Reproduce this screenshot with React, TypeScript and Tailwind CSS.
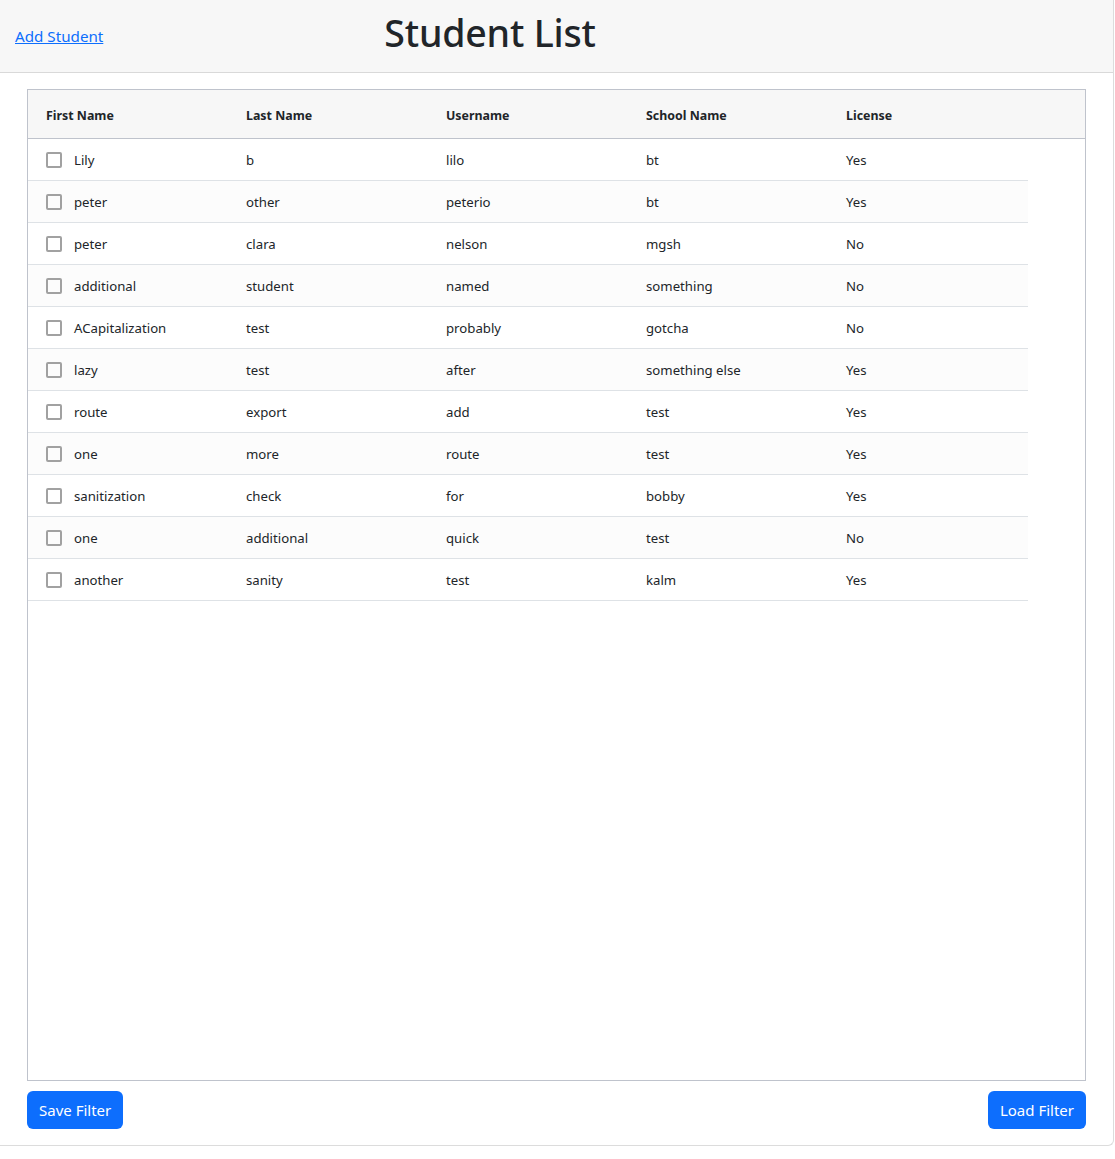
import React from "react";

const rows = [
  ["Lily", "b", "lilo", "bt", "Yes"],
  ["peter", "other", "peterio", "bt", "Yes"],
  ["peter", "clara", "nelson", "mgsh", "No"],
  ["additional", "student", "named", "something", "No"],
  ["ACapitalization", "test", "probably", "gotcha", "No"],
  ["lazy", "test", "after", "something else", "Yes"],
  ["route", "export", "add", "test", "Yes"],
  ["one", "more", "route", "test", "Yes"],
  ["sanitization", "check", "for", "bobby", "Yes"],
  ["one", "additional", "quick", "test", "No"],
  ["another", "sanity", "test", "kalm", "Yes"],
];

const headers = ["First Name", "Last Name", "Username", "School Name", "License"];

export default function App() {
  return (
    <div
      className="w-[1114px] h-[1146px] bg-white border-r border-b border-[#dcdcdc] rounded-br-[6px] text-[#212529] flex flex-col"
      style={{ fontFamily: '"Noto Sans", "Open Sans", sans-serif' }}
    >
      <div className="h-[73px] bg-[#f7f7f7] border-b border-[#d9d9d9] flex items-center px-[15px] shrink-0">
        <a href="#" className="text-[#0d6efd] underline text-[15.2px] leading-none mt-[1px]">
          Add Student
        </a>
        <h1 className="ml-[281px] text-[37.5px] font-medium leading-none -mt-[6px] tracking-[-0.2px]">Student List</h1>
      </div>
      <div className="flex-1 flex flex-col px-[27px] pt-[16px] pb-[16px]">
        <div className="h-[992px] border border-[#bfc3cc] flex flex-col">
          <div className="h-[49px] bg-[#f7f7f7] border-b border-[#bfc3cc] flex items-center shrink-0">
            {headers.map((h) => (
              <div key={h} className="w-[200px] pl-[18px] pt-[4px] text-[12.4px] font-bold">
                {h}
              </div>
            ))}
          </div>
          <div className="w-[1000px]">
            {rows.map((r, i) => (
              <div
                key={i}
                className={`h-[42px] flex items-center border-b border-[#dee2e6] text-[13.2px] ${
                  i % 2 === 1 ? "bg-[#fcfcfc]" : "bg-white"
                }`}
              >
                {r.map((c, j) => (
                  <div key={j} className="w-[200px] pl-[18px] pt-[2px] flex items-center">
                    {j === 0 && (
                      <span className="w-[16px] h-[16px] border-2 border-[#a1a1a1] rounded-[2px] mr-[12px] shrink-0" />
                    )}
                    <span>{c}</span>
                  </div>
                ))}
              </div>
            ))}
          </div>
        </div>
        <div className="flex justify-between mt-[10px]">
          <button className="h-[38px] px-[12px] bg-[#0d6efd] text-white text-[15px] rounded-[6px]">
            Save Filter
          </button>
          <button className="h-[38px] px-[12px] bg-[#0d6efd] text-white text-[15px] rounded-[6px]">
            Load Filter
          </button>
        </div>
      </div>
    </div>
  );
}
